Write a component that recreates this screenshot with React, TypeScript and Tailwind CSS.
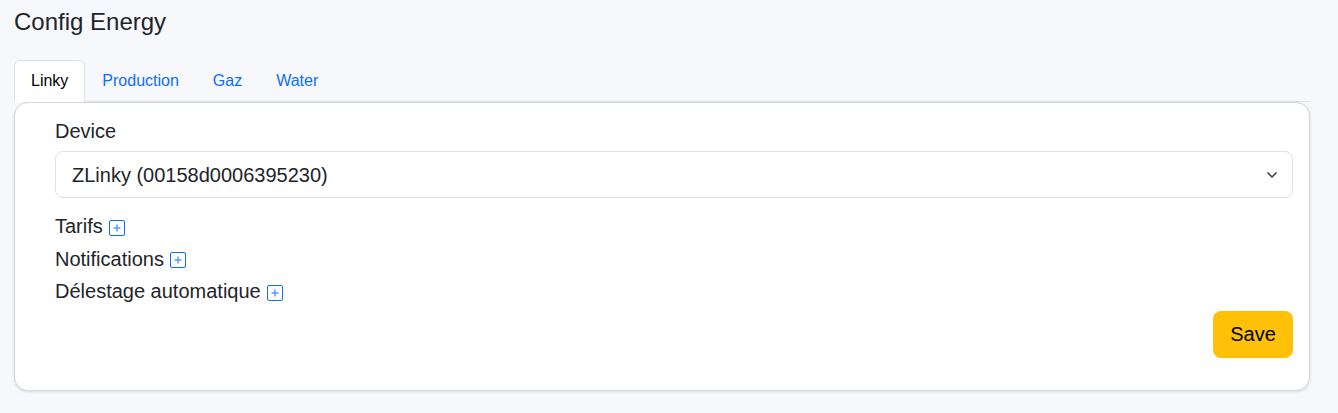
import React from "react";

function PlusBox() {
  return (
    <span className="inline-flex items-center justify-center w-[16px] h-[16px] border border-[#0d6efd] rounded-[2px] ml-[6px] mt-[3px]">
      <svg width="10" height="10" viewBox="0 0 10 10">
        <path d="M5 1.5v7M1.5 5h7" stroke="#5b9bf8" strokeWidth="1.5" />
      </svg>
    </span>
  );
}

export default function App() {
  return (
    <div className="min-h-[413px] bg-[#f7f8fb] text-[#212529] font-['Liberation_Sans',Arial,sans-serif] px-[14px] pt-[8px]">
      <h1 className="text-[24px] leading-[28px] m-0 font-normal">Config Energy</h1>
      <div className="mt-[24px] flex items-end border-b border-[#dee2e6] mr-[14px] h-[42px]">
        <div className="h-[42px] -mb-px px-[16px] flex items-center bg-white border border-[#dee2e6] border-b-white rounded-t-[6px] text-[16px] text-black">Linky</div>
        <div className="h-[41px] px-[17px] flex items-center text-[16px] text-[#0d6efd]">Production</div>
        <div className="h-[41px] px-[17px] flex items-center text-[16px] text-[#0d6efd]">Gaz</div>
        <div className="h-[41px] px-[17px] flex items-center text-[16px] text-[#0d6efd]">Water</div>
      </div>
      <div className="mr-[14px] bg-white border border-[#d5d7da] rounded-[14px] shadow-[0_1px_3px_rgba(0,0,0,0.12)] h-[289px] pl-[40px] pr-[16px] pt-[15px]">
        <div className="text-[20px] leading-[27px]">Device</div>
        <div className="mt-[6px] h-[47px] border border-[#dee2e6] rounded-[8px] flex items-center justify-between pl-[16px] pr-[14px] text-[20px]">
          <span>ZLinky (00158d0006395230)</span>
          <svg width="12" height="8" viewBox="0 0 12 8">
            <path d="M1.5 1.5l4.5 4.5 4.5-4.5" fill="none" stroke="#343a40" strokeWidth="1.5" />
          </svg>
        </div>
        <div className="mt-[12px] text-[20px] leading-[32.5px] flex items-center">Tarifs<PlusBox /></div>
        <div className="text-[20px] leading-[32.5px] flex items-center">Notifications<PlusBox /></div>
        <div className="text-[20px] leading-[32.5px] flex items-center">Délestage automatique<PlusBox /></div>
        <div className="flex justify-end mt-[3px]">
          <button className="h-[47px] w-[80px] bg-[#ffc107] rounded-[8px] text-[20px] text-black">Save</button>
        </div>
      </div>
    </div>
  );
}
